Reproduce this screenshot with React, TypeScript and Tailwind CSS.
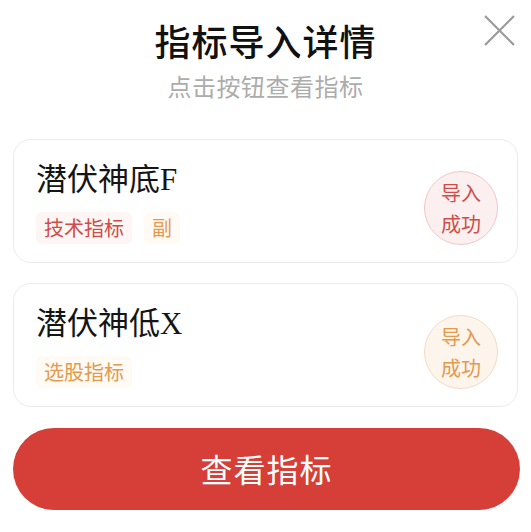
import React from "react";

interface Item {
  name: string;
  tags: { label: string; tone: "red" | "orange" }[];
  tone: "red" | "orange";
}

const items: Item[] = [
  {
    name: "潜伏神底F",
    tags: [
      { label: "技术指标", tone: "red" },
      { label: "副", tone: "orange" },
    ],
    tone: "red",
  },
  {
    name: "潜伏神低X",
    tags: [{ label: "选股指标", tone: "orange" }],
    tone: "orange",
  },
];

const tagCls = {
  red: "bg-[#fdf6f5] text-[#cf4d48]",
  orange: "bg-[#fffaf3] text-[#e3994f]",
};

const badgeCls = {
  red: "bg-[#fcefef] border-[#efc9c8] text-[#cf4d48]",
  orange: "bg-[#fdf4ec] border-[#f4dcc6] text-[#e3994f]",
};

const sans = { fontFamily: '"Noto Sans CJK SC", "Noto Sans", sans-serif' };

export default function App() {
  return (
    <div className="w-[531px] h-[532px] bg-white px-[13px] overflow-hidden" style={sans}>
      <div className="relative flex flex-col items-center pt-[18px]">
        <h1 className="text-[36px] leading-[44px] font-medium text-[#111111] tracking-[1px]">指标导入详情</h1>
        <p className="mt-[9px] text-[24px] leading-[30px] text-[#acacac] tracking-[0.5px]">点击按钮查看指标</p>
        <button className="absolute right-[3px] top-[15px] w-[31px] h-[31px]">
          <svg viewBox="0 0 30 30" width="31" height="31">
            <path d="M1 1 L29 29 M29 1 L1 29" stroke="#9b9b9b" strokeWidth="2.2" fill="none" />
          </svg>
        </button>
      </div>

      <div className="mt-[38px] flex flex-col gap-[20px]">
        {items.map((it) => (
          <div
            key={it.name}
            className="h-[124px] rounded-[18px] border border-[#ebebeb] flex items-center justify-between pl-[22px] pr-[19px]"
          >
            <div className="flex flex-col pt-[1px]">
              <div
                className="text-[31px] leading-[40px] text-[#151515]"
                style={{ fontFamily: '"Liberation Serif", "Noto Sans CJK SC", serif' }}
              >
                {it.name}
              </div>
              <div className="mt-[12px] flex gap-[12px]">
                {it.tags.map((t) => (
                  <span
                    key={t.label}
                    className={`h-[32px] px-[8px] rounded-[6px] text-[20px] leading-[32px] ${tagCls[t.tone]}`}
                  >
                    {t.label}
                  </span>
                ))}
              </div>
            </div>
            <div
              className={`mt-[14px] w-[74px] h-[74px] rounded-full border flex flex-col items-center justify-center text-[20px] leading-[31px] ${badgeCls[it.tone]}`}
            >
              <span>导入</span>
              <span>成功</span>
            </div>
          </div>
        ))}
      </div>

      <button className="mt-[21px] w-[507px] h-[82px] rounded-full bg-[#d63f38] text-white text-[32px] tracking-[1px] flex items-center justify-center pb-[2px]">
        查看指标
      </button>
    </div>
  );
}
